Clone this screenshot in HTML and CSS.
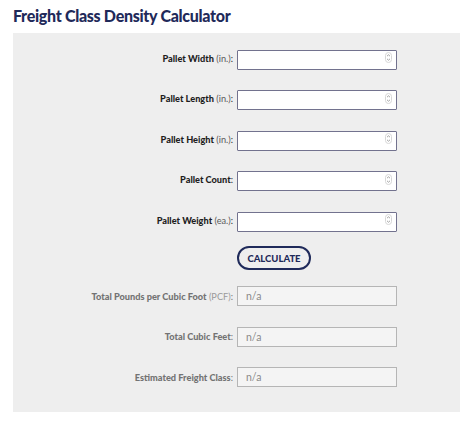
FILE: index.html
```html
<!DOCTYPE html>
<html>
<head>
<meta charset="utf-8">
<link rel="stylesheet" href="styles.css">
</head>
<body>
<h1 class="title">Freight Class Density Calculator</h1>
<div class="panel">
  <div class="row">
    <label class="label"><b>Pallet Width</b> <span class="unit">(in.)</span>:</label>
    <div class="field"><input class="num" type="text"><span class="spin"><svg width="7" height="11" viewBox="0 0 7 11"><rect x="0.5" y="0.5" width="6" height="10" rx="3" fill="none" stroke="#d6d6d6"/><path d="M2 4.2 L3.5 2.8 L5 4.2 M2 6.8 L3.5 8.2 L5 6.8" fill="none" stroke="#8a8a8a" stroke-width="0.8"/></svg></span></div>
  </div>
  <div class="row">
    <label class="label"><b>Pallet Length</b> <span class="unit">(in.)</span>:</label>
    <div class="field"><input class="num" type="text"><span class="spin"><svg width="7" height="11" viewBox="0 0 7 11"><rect x="0.5" y="0.5" width="6" height="10" rx="3" fill="none" stroke="#d6d6d6"/><path d="M2 4.2 L3.5 2.8 L5 4.2 M2 6.8 L3.5 8.2 L5 6.8" fill="none" stroke="#8a8a8a" stroke-width="0.8"/></svg></span></div>
  </div>
  <div class="row">
    <label class="label"><b>Pallet Height</b> <span class="unit">(in.)</span>:</label>
    <div class="field"><input class="num" type="text"><span class="spin"><svg width="7" height="11" viewBox="0 0 7 11"><rect x="0.5" y="0.5" width="6" height="10" rx="3" fill="none" stroke="#d6d6d6"/><path d="M2 4.2 L3.5 2.8 L5 4.2 M2 6.8 L3.5 8.2 L5 6.8" fill="none" stroke="#8a8a8a" stroke-width="0.8"/></svg></span></div>
  </div>
  <div class="row">
    <label class="label"><b>Pallet Count</b>:</label>
    <div class="field"><input class="num" type="text"><span class="spin"><svg width="7" height="11" viewBox="0 0 7 11"><rect x="0.5" y="0.5" width="6" height="10" rx="3" fill="none" stroke="#d6d6d6"/><path d="M2 4.2 L3.5 2.8 L5 4.2 M2 6.8 L3.5 8.2 L5 6.8" fill="none" stroke="#8a8a8a" stroke-width="0.8"/></svg></span></div>
  </div>
  <div class="row">
    <label class="label"><b>Pallet Weight</b> <span class="unit">(ea.)</span>:</label>
    <div class="field"><input class="num" type="text"><span class="spin"><svg width="7" height="11" viewBox="0 0 7 11"><rect x="0.5" y="0.5" width="6" height="10" rx="3" fill="none" stroke="#d6d6d6"/><path d="M2 4.2 L3.5 2.8 L5 4.2 M2 6.8 L3.5 8.2 L5 6.8" fill="none" stroke="#8a8a8a" stroke-width="0.8"/></svg></span></div>
  </div>
  <div class="row btnrow">
    <span class="label"></span>
    <button class="calc" type="button">CALCULATE</button>
  </div>
  <div class="row out">
    <label class="label"><b>Total Pounds per Cubic Foot</b> <span class="unit">(PCF)</span>:</label>
    <div class="result">n/a</div>
  </div>
  <div class="row out">
    <label class="label"><b>Total Cubic Feet</b>:</label>
    <div class="result">n/a</div>
  </div>
  <div class="row out">
    <label class="label"><b>Estimated Freight Class</b>:</label>
    <div class="result">n/a</div>
  </div>
</div>
</body>
</html>
```
FILE: styles.css
```css
html, body {
  margin: 0;
  padding: 0;
  background: #ffffff;
}
body {
  padding: 5px 14px 0 13px;
  font-family: Lato, "Open Sans", sans-serif;
}
.title {
  margin: 0 0 7px 0;
  font-size: 16px;
  line-height: 21px;
  font-weight: 900;
  color: #1f2a5a;
  letter-spacing: -0.3px;
}
.panel {
  background: #eeeeee;
  padding: 15px 0 25px 0;
  display: flex;
  flex-direction: column;
  gap: 20.5px;
  width: 447px;
}
.row {
  display: flex;
  align-items: center;
  gap: 4px;
}
.label {
  width: 220px;
  text-align: right;
  font-size: 9.2px;
  color: #1e1e1e;
}
.label b {
  font-weight: 900;
}
.unit {
  color: #5a5a5a;
}
.field {
  position: relative;
  width: 160px;
  height: 20px;
}
.num {
  box-sizing: border-box;
  width: 160px;
  height: 20px;
  margin: 0;
  border: 1.5px solid #72728e;
  border-radius: 1px;
  background: #ffffff;
  padding: 0 8px;
  outline: none;
}
.spin {
  position: absolute;
  right: 5px;
  top: 4px;
  line-height: 0;
}
.btnrow {
  margin-top: -4.5px;
  margin-bottom: -4.5px;
}
.calc {
  box-sizing: border-box;
  width: 74px;
  height: 24px;
  border: 2px solid #1f2a5a;
  border-radius: 12px;
  background: transparent;
  color: #1f2a5a;
  font-family: Lato, "Open Sans", sans-serif;
  font-weight: 900;
  font-size: 9.5px;
  padding: 0;
  letter-spacing: 0px;
}
.out .label {
  color: #737373;
}
.out .unit {
  color: #9a9a9a;
}
.result {
  box-sizing: border-box;
  width: 160px;
  height: 20px;
  border: 1px solid #b5b5b5;
  background: #f4f4f4;
  color: #8a8a8a;
  font-size: 10.5px;
  line-height: 18px;
  padding: 0 8px;
}
```
